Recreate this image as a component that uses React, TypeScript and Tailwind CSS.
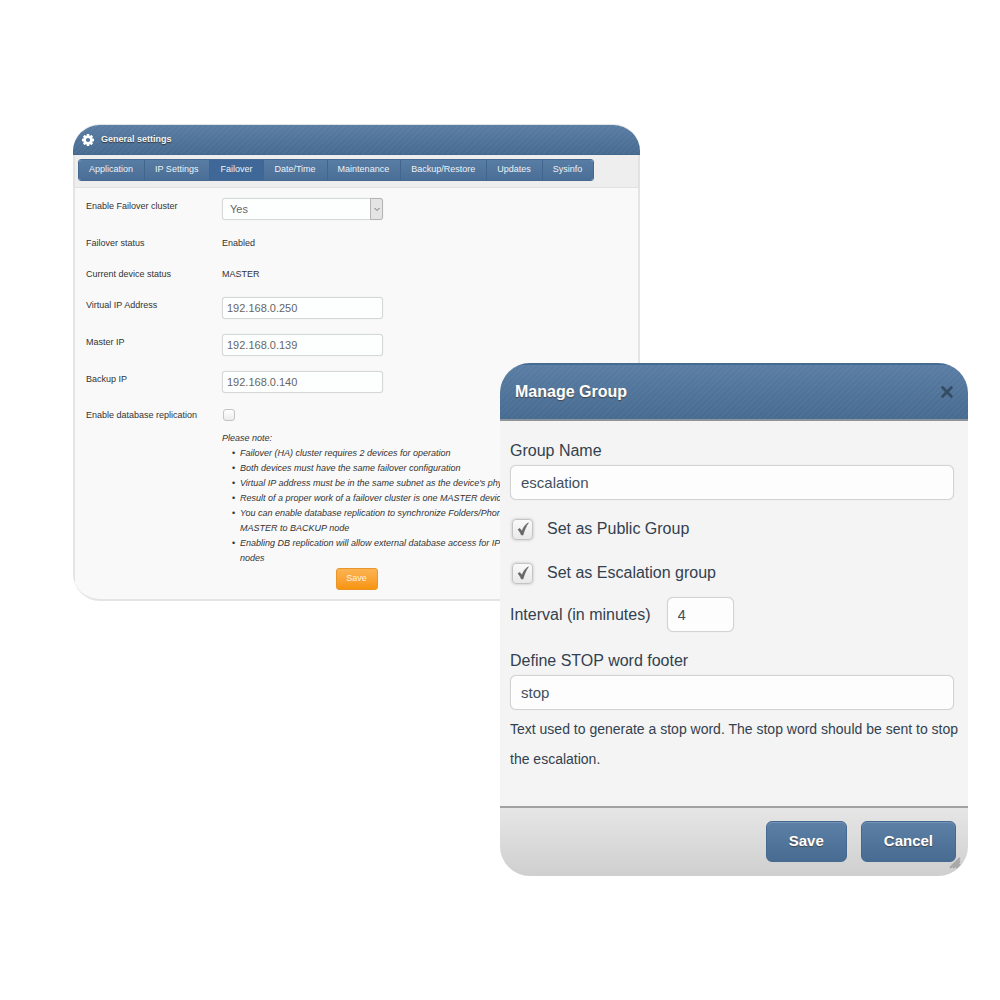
import { useState } from "react";
import type { ReactNode } from "react";

const tabs = [
  "Application",
  "IP Settings",
  "Failover",
  "Date/Time",
  "Maintenance",
  "Backup/Restore",
  "Updates",
  "Sysinfo",
];

const smallInput =
  "h-[22px] w-[161px] rounded-[3px] border border-[#d5d8d8] bg-[#fdfefe] px-1 text-[11px] text-[#666] shadow-[0_0_1px_#d5d8d8]";
const largeInput =
  "h-[35px] rounded-md border border-[#d3d3d3] bg-[#fdfdfd] px-2.5 text-[15px] text-[#43505c] shadow-[0_0_1px_#ccc]";
const headerFill =
  "bg-[repeating-linear-gradient(135deg,rgba(255,255,255,0.03)_0px,rgba(255,255,255,0.03)_2px,transparent_2px,transparent_4px),linear-gradient(to_bottom,#5a7da4,#466a90)]";

function GearIcon() {
  return (
    <svg viewBox="0 0 24 24" className="size-3" aria-hidden="true">
      <g fill="#fff">
        {[0, 45, 90, 135].map((angle) => (
          <rect
            key={angle}
            x="9.2"
            y="0"
            width="5.6"
            height="24"
            rx="1.4"
            transform={`rotate(${angle} 12 12)`}
          />
        ))}
        <circle cx="12" cy="12" r="9.2" />
      </g>
      <circle cx="12" cy="12" r="4.2" fill="#50749b" />
    </svg>
  );
}

function Row({
  label,
  htmlFor,
  children,
}: {
  label: string;
  htmlFor?: string;
  children: ReactNode;
}) {
  return (
    <div className="grid grid-cols-[136px_1fr] items-start leading-4">
      {htmlFor ? <label htmlFor={htmlFor}>{label}</label> : <span>{label}</span>}
      <div className="flex min-h-4 items-center">{children}</div>
    </div>
  );
}

function Note({ children }: { children: ReactNode }) {
  return (
    <li className="before:-ml-2 before:inline-block before:w-2 before:not-italic before:content-['•']">
      {children}
    </li>
  );
}

function GeneralSettings() {
  const [active, setActive] = useState("Failover");

  return (
    <section className="col-span-2 col-start-1 row-start-1 self-start overflow-hidden rounded-[27px] border-t border-b-2 border-[#e4e4e4] bg-[#f9f9f9] text-[9px] text-[#333]">
      <header
        className={`flex h-[30px] items-center gap-[7px] border-b border-[#44678d] px-[9px] ${headerFill}`}
      >
        <GearIcon />
        <h1 className="font-bold text-[#f4f6f8] [text-shadow:0_1px_1px_#333]">
          General settings
        </h1>
      </header>
      <nav className="flex border-x-2 border-b border-[#e2e2e2] bg-[#eeeeee] px-[3px] pt-1 pb-1.5">
        <div className="flex h-[22px] overflow-hidden rounded-[3px] border border-[#456990]">
          {tabs.map((tab) => (
            <button
              key={tab}
              type="button"
              onClick={() => setActive(tab)}
              className={`border-r border-[#41658c] pr-[11px] pl-2.5 text-[#eef2f6] last:border-r-0 ${
                active === tab
                  ? "bg-[#3f6797]"
                  : "bg-linear-to-b from-[#587da4] to-[#4a6e95]"
              }`}
            >
              {tab}
            </button>
          ))}
        </div>
      </nav>
      <form
        className="border-x-2 border-[#e4e4e4] px-[11px] pt-2.5 pb-[9px]"
        onSubmit={(e) => e.preventDefault()}
      >
        <div className="flex flex-col gap-[15px]">
          <Row label="Enable Failover cluster" htmlFor="cluster">
            <div className="relative">
              <select
                id="cluster"
                className={`appearance-none pl-[7px]! ${smallInput}`}
              >
                <option>Yes</option>
              </select>
              <span className="pointer-events-none absolute inset-y-0 right-0 flex w-[13px] items-center justify-center rounded-r-[3px] border border-[#b5b5b5] bg-[#e4e4e4]">
                <svg viewBox="0 0 8 5" className="h-[5px] w-2" aria-hidden="true">
                  <path
                    d="M1.5 1 4 3.5 6.5 1"
                    fill="none"
                    stroke="#666"
                    strokeWidth="0.9"
                  />
                </svg>
              </span>
            </div>
          </Row>
          <Row label="Failover status">Enabled</Row>
          <Row label="Current device status">MASTER</Row>
          <Row label="Virtual IP Address" htmlFor="virtual-ip">
            <input
              id="virtual-ip"
              className={smallInput}
              defaultValue="192.168.0.250"
            />
          </Row>
          <Row label="Master IP" htmlFor="master-ip">
            <input
              id="master-ip"
              className={smallInput}
              defaultValue="192.168.0.139"
            />
          </Row>
          <Row label="Backup IP" htmlFor="backup-ip">
            <input
              id="backup-ip"
              className={smallInput}
              defaultValue="192.168.0.140"
            />
          </Row>
        </div>
        <div className="mt-3.5">
          <Row label="Enable database replication" htmlFor="replication">
            <input
              id="replication"
              type="checkbox"
              className="ml-px size-3 appearance-none rounded-[3px] border border-[#c4c4c4] bg-linear-to-b from-white to-[#ececec] checked:bg-[#466a90]"
            />
          </Row>
        </div>
        <div className="mt-2 ml-[136px] leading-[15px] whitespace-nowrap italic">
          <p>Please note:</p>
          <ul className="pl-[18px]">
            <Note>Failover (HA) cluster requires 2 devices for operation</Note>
            <Note>Both devices must have the same failover configuration</Note>
            <Note>
              Virtual IP address must be in the same subnet as the device's phy
            </Note>
            <Note>
              Result of a proper work of a failover cluster is one MASTER device
            </Note>
            <Note>
              You can enable database replication to synchronize Folders/Phon
              <br />
              MASTER to BACKUP node
            </Note>
            <Note>
              Enabling DB replication will allow external database access for IP
              <br />
              nodes
            </Note>
          </ul>
        </div>
        <div className="mt-0.5 flex justify-center">
          <button
            type="submit"
            className="h-[22px] w-[42px] rounded-[3px] border border-[#e8952b] bg-linear-to-b from-[#fbb450] to-[#f89406] text-[#fdf3df]"
          >
            Save
          </button>
        </div>
      </form>
    </section>
  );
}

function GroupCheckbox({ id, label }: { id: string; label: string }) {
  return (
    <label htmlFor={id} className="flex h-5 items-center gap-3.5 pl-0.5">
      <span className="grid size-[21px] items-center justify-items-center">
        <input
          id={id}
          type="checkbox"
          defaultChecked
          className="peer col-start-1 row-start-1 size-[21px] appearance-none rounded-sm border border-[#c4c4c4] bg-linear-to-b from-[#fafafa] to-[#e9e9e9] shadow-[0_0_3px_#bbb]"
        />
        <svg
          viewBox="0 0 14 14"
          className="pointer-events-none invisible col-start-1 row-start-1 size-3.5 peer-checked:visible"
          aria-hidden="true"
        >
          <path
            d="M2 7.6 3.8 6.4 6 9.2C7.4 5.4 9.2 2.6 12.4.8 10.2 4 8.4 8 7 13L5.4 13C4.6 11 3.4 9 2 7.6Z"
            fill="#666"
            stroke="#666"
            strokeWidth=".6"
          />
        </svg>
      </span>
      {label}
    </label>
  );
}

function ManageGroup() {
  const button =
    "h-[41px] rounded-md border border-[#456990] bg-linear-to-b from-[#5d80a6] to-[#486b92] px-[22px] text-[15px] font-bold text-white shadow-[inset_0_1px_0_#7594b5] [text-shadow:0_1px_1px_#444]";

  return (
    <div
      role="dialog"
      aria-labelledby="group-title"
      className="z-10 col-span-2 col-start-2 row-start-1 mt-[239px] self-start overflow-hidden rounded-[30px] bg-[#f4f4f4] text-[16px] text-[#32414f]"
    >
      <header
        className={`flex h-[58px] items-center justify-between border-t-2 border-b-2 border-t-[#466b93] border-b-[#8e949b] pr-3.5 pl-[15px] ${headerFill}`}
      >
        <h2
          id="group-title"
          className="font-bold text-white [text-shadow:0_1px_1px_#444]"
        >
          Manage Group
        </h2>
        <button type="button" aria-label="Close">
          <svg viewBox="0 0 14 14" className="size-3.5" aria-hidden="true">
            <path
              d="M1.8 1.8 12.2 12.2M12.2 1.8 1.8 12.2"
              stroke="#344b64"
              strokeWidth="2.8"
            />
          </svg>
        </button>
      </header>
      <form onSubmit={(e) => e.preventDefault()}>
        <div className="flex flex-col pt-5 pr-3.5 pb-8 pl-2.5">
          <label htmlFor="group-name" className="leading-5">
            Group Name
          </label>
          <input
            id="group-name"
            className={`mt-1 w-full ${largeInput}`}
            defaultValue="escalation"
          />
          <div className="mt-[19px] mb-3.5 flex flex-col gap-6">
            <GroupCheckbox id="public" label="Set as Public Group" />
            <GroupCheckbox id="escalation" label="Set as Escalation group" />
          </div>
          <div className="flex items-center gap-4">
            <label htmlFor="interval">Interval (in minutes)</label>
            <input
              id="interval"
              className={`w-[67px] ${largeInput}`}
              defaultValue="4"
            />
          </div>
          <label htmlFor="stop-word" className="mt-[19px] leading-5">
            Define STOP word footer
          </label>
          <input
            id="stop-word"
            className={`mt-1 w-full ${largeInput}`}
            defaultValue="stop"
          />
          <p className="mt-1 -mr-3 text-[14px] leading-[30px]">
            Text used to generate a stop word. The stop word should be sent to
            stop the escalation.
          </p>
        </div>
        <footer className="relative flex justify-end gap-3.5 border-t-2 border-[#a2a2a2] bg-linear-to-b from-[#e6e6e6] to-[#cfcfcf] px-3 pt-[13px] pb-3.5">
          <button type="submit" className={button}>
            Save
          </button>
          <button type="button" className={button}>
            Cancel
          </button>
          <svg
            viewBox="0 0 12 12"
            className="absolute right-[7px] bottom-[7px] size-3"
            aria-hidden="true"
          >
            <path
              d="M1 11 11 1M4 11 11 4M7 11 11 7"
              stroke="#a6a6a6"
              strokeWidth="1.8"
            />
          </svg>
        </footer>
      </form>
    </div>
  );
}

export default function App() {
  return (
    <main className="min-h-screen bg-white pt-[124px] pr-8 pb-10 pl-[73px] font-['Liberation_Sans',Arial,sans-serif]">
      <div className="grid grid-cols-[427fr_140fr_328fr]">
        <GeneralSettings />
        <ManageGroup />
      </div>
    </main>
  );
}
